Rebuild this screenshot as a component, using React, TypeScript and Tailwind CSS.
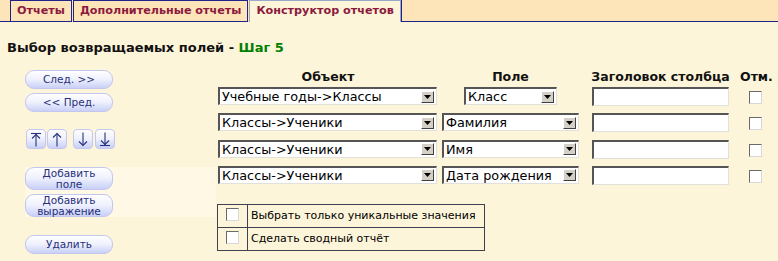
import React from "react";

const font = { fontFamily: '"DejaVu Sans", Verdana, sans-serif' };

const objectRows = [
  { object: "Учебные годы->Классы", field: "Класс", narrow: true },
  { object: "Классы->Ученики", field: "Фамилия", narrow: false },
  { object: "Классы->Ученики", field: "Имя", narrow: false },
  { object: "Классы->Ученики", field: "Дата рождения", narrow: false },
];

function Tab({ label, active }: { label: string; active?: boolean }) {
  return (
    <div
      className={
        active
          ? "h-[22px] flex items-center px-[6px] bg-[#fdf5d9] border-x border-t border-[#9aa8cc]"
          : "h-[22px] flex items-center px-[6px] bg-[#fde4b9] border border-[#1f238a] mr-[1px]"
      }
    >
      <span className="text-[11.2px] font-bold text-[#8b1a3e]">{label}</span>
    </div>
  );
}

function PillButton({ children, tall }: { children: React.ReactNode; tall?: boolean }) {
  return (
    <button
      className={`w-[88px] ${tall ? "h-[23px] leading-[10.5px]" : "h-[19px]"} rounded-[9px] border border-[#c3c6ee] bg-gradient-to-b from-white via-[#eef0fd] to-[#c9d0f6] text-[10.5px] text-[#27307c]`}
    >
      {children}
    </button>
  );
}

function ArrowButton({ dir, bar }: { dir: "up" | "down"; bar?: boolean }) {
  const up = dir === "up";
  return (
    <button className="w-[20px] h-[20px] rounded-[4px] border border-[#c3c6ee] bg-gradient-to-b from-white via-[#eef0fd] to-[#c9d0f6] flex items-center justify-center">
      <svg width="12" height="15" viewBox="0 0 12 15" fill="none" stroke="#27307c" strokeWidth="1.1">
        {up ? (
          <>
            {bar && <line x1="1" y1="1.5" x2="11" y2="1.5" />}
            <line x1="6" y1={bar ? 2 : 1.5} x2="6" y2="14.5" />
            <polyline points={bar ? "2,6.5 6,2.5 10,6.5" : "2,5.5 6,1.5 10,5.5"} />
          </>
        ) : (
          <>
            {bar && <line x1="1" y1="13.5" x2="11" y2="13.5" />}
            <line x1="6" y1="0.5" x2="6" y2={bar ? 13 : 13.5} />
            <polyline points={bar ? "2,8.5 6,12.5 10,8.5" : "2,9.5 6,13.5 10,9.5"} />
          </>
        )}
      </svg>
    </button>
  );
}

function Select({ value, width }: { value: string; width: string }) {
  return (
    <div
      className={`${width} h-[18px] flex items-center bg-white border-t-2 border-l-2 border-t-[#555] border-l-[#555] border-b border-r border-b-[#e2e0da] border-r-[#e2e0da] pr-[2px]`}
    >
      <span className="flex-1 pl-[2px] text-[12.8px] text-black leading-[15px] whitespace-nowrap">{value}</span>
      <span className="w-[13px] h-[12px] bg-[#d4d0c8] border-t border-l border-t-white border-l-white border-b border-r border-b-[#404040] border-r-[#404040] flex items-center justify-center">
        <svg width="7" height="4" viewBox="0 0 7 4">
          <polygon points="0,0 7,0 3.5,4" fill="#000" />
        </svg>
      </span>
    </div>
  );
}

function CheckBox() {
  return (
    <span className="inline-block w-[13px] h-[13px] bg-white border-t border-l border-t-[#6a6a6a] border-l-[#6a6a6a] border-b border-r border-b-[#d8d8d8] border-r-[#d8d8d8]" />
  );
}

export default function App() {
  return (
    <div className="w-[778px] h-[261px] bg-[#fdf5d9] overflow-hidden" style={font}>
      {/* tabs */}
      <div className="flex h-[22px] bg-[#fde4b9]">
        <div className="w-[10px] border-b border-[#1f238a]" />
        <Tab label="Отчеты" />
        <Tab label="Дополнительные отчеты" />
        <Tab label="Конструктор отчетов" active />
        <div className="flex-1 border-l border-b border-[#1f238a]" />
      </div>

      <div className="pl-[7px] pt-[16px] h-[46px] text-[13px] font-bold text-[#111]">
        Выбор возвращаемых полей - <span className="text-[#008000]">Шаг 5</span>
      </div>

      <div className="flex">
        {/* left buttons */}
        <div className="w-[216px] pl-[25px] pt-[2px] flex flex-col">
          <div className="flex flex-col gap-[4px]">
            <PillButton>След. &gt;&gt;</PillButton>
            <PillButton>&lt;&lt; Пред.</PillButton>
          </div>
          <div className="flex mt-[17px] ml-[1px]">
            <ArrowButton dir="up" bar />
            <span className="w-[1px]" />
            <ArrowButton dir="up" />
            <span className="w-[6px]" />
            <ArrowButton dir="down" />
            <span className="w-[2px]" />
            <ArrowButton dir="down" bar />
          </div>
          <div className="flex flex-col gap-[4px] mt-[18px] bg-[#fef8e4]">
            <PillButton tall>
              Добавить
              <br />
              поле
            </PillButton>
            <PillButton tall>
              Добавить
              <br />
              выражение
            </PillButton>
          </div>
          <div className="mt-[14px]">
            <PillButton>Удалить</PillButton>
          </div>
        </div>

        {/* fields table */}
        <div className="flex flex-col">
          <div className="grid grid-cols-[224px_141px_159px_30px] text-[12.5px] font-bold text-[#111] h-[19px] items-start">
            <div className="text-center">Объект</div>
            <div className="text-center">Поле</div>
            <div className="text-center whitespace-nowrap">Заголовок столбца</div>
            <div className="text-center">Отм.</div>
          </div>
          {objectRows.map((r, i) => (
            <div key={i} className="grid grid-cols-[224px_141px_159px_30px] h-[26.3px] items-start">
              <div className="pl-[2px]">
                <Select value={r.object} width="w-[219px]" />
              </div>
              <div className="flex justify-center">
                <Select value={r.field} width={r.narrow ? "w-[93px]" : "w-[137px]"} />
              </div>
              <div className="flex justify-center">
                <div className="w-[137px] h-[19px] bg-white border-t-2 border-l-2 border-t-[#555] border-l-[#555] border-b border-r border-b-[#e2e0da] border-r-[#e2e0da]" />
              </div>
              <div className="flex justify-center pt-[4px]">
                <CheckBox />
              </div>
            </div>
          ))}

          <table className="mt-[12px] ml-[1px] w-[268px] border border-t-[#c8ccd8] border-l-[#c8ccd8] border-b-[#7f8aa8] border-r-[#7f8aa8] border-collapse text-[11px] text-black">
            <tbody>
              <tr className="h-[23px]">
                <td className="w-[30px] border border-[#3f4050] text-center align-middle">
                  <span className="inline-flex mt-[3px]">
                    <CheckBox />
                  </span>
                </td>
                <td className="border border-[#3f4050] pl-[3px] whitespace-nowrap">Выбрать только уникальные значения</td>
              </tr>
              <tr className="h-[22px]">
                <td className="border border-[#3f4050] text-center align-middle">
                  <span className="inline-flex mt-[3px]">
                    <CheckBox />
                  </span>
                </td>
                <td className="border border-[#3f4050] pl-[3px] whitespace-nowrap">Сделать сводный отчёт</td>
              </tr>
            </tbody>
          </table>
        </div>
      </div>
    </div>
  );
}
